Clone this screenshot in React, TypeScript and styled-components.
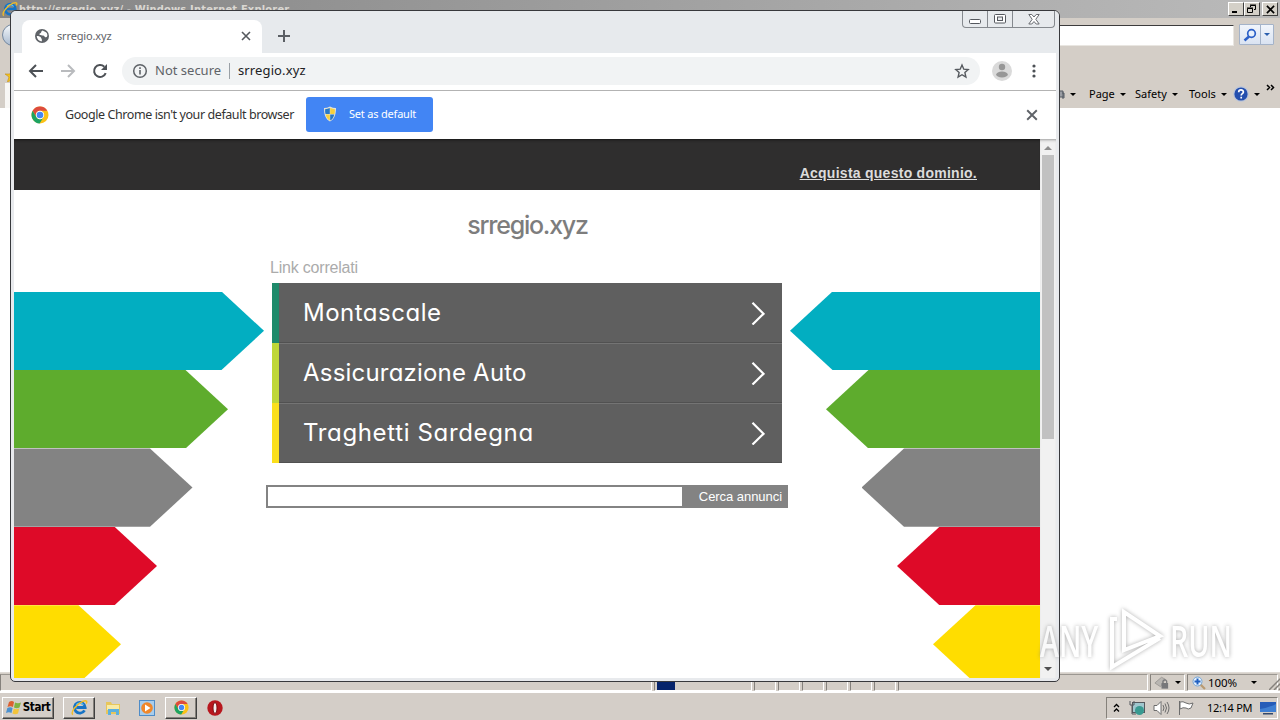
import { FC } from "react";
import styled, { createGlobalStyle } from "styled-components";

const ui = `"DejaVu Sans Condensed", "DejaVu Sans", sans-serif`;
const tahoma = `"Noto Sans", "Open Sans", sans-serif`;
const arial = `"Liberation Sans", Arial, sans-serif`;
const display = `Inter, Lato, sans-serif`;

const GlobalStyle = createGlobalStyle`
  * {
    box-sizing: border-box;
  }
  body {
    margin: 0;
    overflow: hidden;
    font-family: ${ui};
  }
  svg {
    display: block;
    flex: none;
  }
  button {
    font: inherit;
    padding: 0;
    margin: 0;
    border: 0;
  }
`;

const Desktop = styled("div")`
  position: relative;
  display: flex;
  flex-direction: column;
  width: 1280px;
  height: 720px;
  overflow: hidden;
  background: #d4cec7;
`;

const Text = styled("span")<{
  $size: number;
  $spacing?: number;
  $color?: string;
  $font?: string;
  $weight?: number;
}>`
  font-family: ${({ $font }) => $font || ui};
  font-size: ${({ $size }) => $size}px;
  font-weight: ${({ $weight }) => $weight || 400};
  letter-spacing: ${({ $spacing }) => $spacing || 0}px;
  color: ${({ $color }) => $color || "#000"};
  line-height: 1.2;
  white-space: nowrap;
`;

/* Internet Explorer, behind */

const Explorer = styled("div")`
  display: flex;
  flex-direction: column;
  height: 692px;
`;
const ExplorerTitle = styled("div")`
  display: flex;
  align-items: center;
  height: 18px;
  padding: 0 2px 0 2px;
  background: linear-gradient(90deg, #858585, #bababa);
`;
const ExplorerName = styled("div")`
  flex: 1;
  padding-left: 1px;
  color: #dad7d2;
  font-size: 11px;
  font-weight: bold;
  letter-spacing: 0.2px;
`;
const Bevel = styled("div")<{ $gap?: number }>`
  display: flex;
  align-items: center;
  justify-content: center;
  width: 16px;
  height: 14px;
  margin-left: ${({ $gap }) => $gap || 0}px;
  background: #d4d0c8;
  border: 1px solid;
  border-color: #fff #404040 #404040 #fff;
`;
const ExplorerAddress = styled("div")`
  display: flex;
  align-items: flex-start;
  height: 53px;
  padding: 6px 6px 0 0;
`;
const Globe = styled("div")`
  width: 22px;
  height: 22px;
  margin: 0 0 0 2px;
  border: 1px solid #7488a0;
  border-radius: 50%;
  background: linear-gradient(#f5f8fb, #aabbd0);
`;
const AddressField = styled("div")`
  flex: 1;
  height: 21px;
  margin: 1px 5px 0 4px;
  background: #fff;
  border: 1px solid;
  border-color: #3c3c3c #e9e6e1 #e9e6e1 #3c3c3c;
`;
const SearchSplit = styled("div")`
  display: flex;
  height: 21px;
  border: 1px solid #a4b3c9;
  border-radius: 1px;
  background: linear-gradient(#f1f5fb, #dae3f2);
`;
const SplitPart = styled("div")<{ $width: number }>`
  display: flex;
  align-items: center;
  justify-content: center;
  width: ${({ $width }) => $width}px;
  & + & {
    border-left: 1px solid #a4b3c9;
  }
`;
const CommandBar = styled("div")`
  display: flex;
  justify-content: space-between;
  height: 37px;
  padding: 0 3px 0 5px;
`;
const CommandStart = styled("div")`
  width: 12px;
  height: 37px;
  background: linear-gradient(#d4cec7 12px, #f8f7f5 12px);
`;
const Commands = styled("div")`
  display: flex;
  align-items: center;
  padding-top: 9px;
`;
const Command = styled("div")<{ $width: number }>`
  display: flex;
  align-items: center;
  gap: 5px;
  width: ${({ $width }) => $width}px;
`;
const More = styled("div")`
  width: 11px;
  height: 20px;
`;
const Caret = styled("i")<{ $color?: string }>`
  width: 0;
  height: 0;
  border: 3px solid transparent;
  border-top-color: ${({ $color }) => $color || "#000"};
  border-bottom: 0;
`;
const ExplorerPage = styled("div")`
  height: 564px;
  background: #fff;
`;
const ExplorerStatus = styled("div")`
  display: flex;
  height: 20px;
  border-top: 1px solid #dedad5;
  border-bottom: 1px solid #fff;
`;
const StatusCell = styled("div")<{ $width: number }>`
  display: flex;
  align-items: center;
  flex: none;
  width: ${({ $width }) => $width}px;
  height: 17px;
  margin-top: 1px;
  border: 1px solid;
  border-color: #9b9791 #fff #fff #85817c;
  margin-right: 2px;
`;
const StatusIcon = styled("div")<{ $left?: number; $right?: number }>`
  margin: 0 ${({ $right }) => $right || 0}px 0 ${({ $left }) => $left || 0}px;
`;
const Progress = styled("div")`
  width: 18px;
  height: 14px;
  margin-left: 2px;
  background: #06246b;
`;

/* Chrome window */

const ChromeWindow = styled("div")`
  position: absolute;
  left: 10px;
  top: 10px;
  width: 1050px;
  height: 672px;
  display: flex;
  flex-direction: column;
  padding: 0 3px 3px;
  background: #e8eaed;
  border: 1px solid #38393c;
  border-radius: 6px 6px 5px 5px;
  overflow: hidden;
`;
const TabStrip = styled("div")`
  display: flex;
  align-items: flex-end;
  height: 42px;
  background: #e7eaed;
  margin: 0 -3px;
  padding-left: 11px;
`;
const Tab = styled("div")`
  display: flex;
  align-items: center;
  width: 240px;
  height: 33px;
  padding: 0 11px 1px 12px;
  border-radius: 8px 8px 0 0;
  background: #fff;
`;
const TabName = styled("div")`
  flex: 1;
  padding-left: 7px;
  display: flex;
`;
const NewTab = styled("div")`
  align-self: flex-end;
  padding: 0 0 11px 16px;
  flex: 1;
`;
const WindowButtons = styled("div")`
  display: flex;
  align-self: flex-start;
  height: 17px;
  margin-right: 4px;
  border: 1px solid #85898e;
  border-top: 0;
  border-radius: 0 0 4px 4px;
`;
const WindowButton = styled("div")<{ $width: number }>`
  display: flex;
  align-items: center;
  justify-content: center;
  width: ${({ $width }) => $width}px;
  & + & {
    border-left: 1px solid #85898e;
  }
`;
const Toolbar = styled("div")`
  display: flex;
  align-items: center;
  height: 38px;
  padding: 0 20px 1px 14px;
  background: #fff;
  border-bottom: 1px solid #b3b3b3;
`;
const NavButtons = styled("div")`
  display: flex;
  gap: 16px;
`;
const Omnibox = styled("div")`
  display: flex;
  align-items: center;
  flex: 1;
  height: 28px;
  margin: 0 12px 0 14px;
  padding: 0 10px;
  border-radius: 14px;
  background: #f1f3f4;
`;
const Divider = styled("div")`
  width: 1px;
  height: 16px;
  margin: 0 8px 0 7px;
  background: #9aa0a6;
`;
const Url = styled("div")`
  flex: 1;
  display: flex;
`;
const NotSecure = styled("div")`
  display: flex;
  width: 67px;
  margin-left: 7px;
`;
const MenuDots = styled("div")`
  margin-left: 20px;
`;
const InfoBar = styled("div")`
  display: flex;
  align-items: center;
  height: 48px;
  padding: 0 18px 0 17px;
  background: #fff;
`;
const InfoText = styled("div")`
  display: flex;
  width: 229px;
  margin: 0 12px 1px 16px;
`;
const DefaultButton = styled("button")`
  display: flex;
  align-items: center;
  gap: 11px;
  width: 127px;
  height: 35px;
  padding: 0 0 1px 16px;
  margin: 0 auto 1px 0;
  border-radius: 3px;
  background: #4285f4;
`;

/* Parked page */

const Viewport = styled("div")`
  display: flex;
  flex: 1;
  min-height: 0;
`;
const Page = styled("div")`
  width: 1026px;
  height: 100%;
  overflow: hidden;
  background: #fff;
`;
const PageHeader = styled("div")`
  display: flex;
  justify-content: flex-end;
  height: 51px;
  padding: 26px 63px 0 0;
  background: #2f2e2e;
  box-shadow: inset 0 3px 3px -2px #171717;
`;
const BuyLink = styled("a")`
  font: bold 14px/17px ${arial};
  letter-spacing: 0.26px;
  color: #dcdcdc;
  text-decoration: underline;
  white-space: nowrap;
`;
const PageBody = styled("div")`
  display: flex;
  justify-content: space-between;
`;
const Ribbons = styled("div")<{ $right?: boolean }>`
  display: flex;
  flex-direction: column;
  align-items: ${({ $right }) => ($right ? "flex-end" : "flex-start")};
  width: 250px;
  padding-top: 101.6px;
`;
const Ribbon = styled("div")<{ $width: number; $color: string; $right?: boolean }>`
  width: ${({ $width }) => $width}px;
  height: 78.4px;
  background: ${({ $color }) => $color};
  clip-path: ${({ $right }) =>
    $right
      ? "polygon(42.5px 0, 100% 0, 100% 100%, 42.5px 100%, 0 50%)"
      : "polygon(0 0, calc(100% - 42.5px) 0, 100% 50%, calc(100% - 42.5px) 100%, 0 100%)"};
`;
const Main = styled("div")`
  display: flex;
  flex-direction: column;
  width: 522px;
`;
const DomainName = styled("div")`
  display: flex;
  justify-content: center;
  height: 68px;
  padding: 20px 0 0 1px;
`;
const Related = styled("div")`
  height: 25px;
  padding-left: 4px;
`;
const LinkList = styled("div")`
  display: flex;
  flex-direction: column;
  width: 510px;
  margin-left: 6px;
`;
const LinkRow = styled("a")<{ $accent: string }>`
  display: flex;
  align-items: center;
  justify-content: space-between;
  height: 60px;
  padding: 0 17px 0 24px;
  border-left: 7px solid ${({ $accent }) => $accent};
  background: #5f5f5f;
  box-shadow: inset 0 1px #747474, inset 0 -1px #515151;
  font-feature-settings: "cv11", "ss03";
  &:first-child {
    box-shadow: inset 0 -1px #515151;
  }
`;
const SearchForm = styled("div")`
  display: flex;
  height: 23px;
  margin-top: 22px;
  background: #838383;
`;
const SearchInput = styled("div")`
  width: 414px;
  margin: 2px 0 2px 2px;
  background: #fff;
`;
const SearchSubmit = styled("div")`
  flex: 1;
  display: flex;
  align-items: center;
  justify-content: flex-end;
  padding-right: 6px;
`;
const ScrollBar = styled("div")`
  display: flex;
  flex-direction: column;
  align-items: center;
  width: 16px;
  padding: 7px 0 7px;
  background: #f1f1f1;
  box-shadow: inset 0 3px 3px -2px #999;
`;
const Thumb = styled("div")`
  width: 12px;
  height: 284px;
  margin: 5px 0 auto;
  background: #c1c1c1;
`;

/* Taskbar */

const Taskbar = styled("div")`
  display: flex;
  align-items: center;
  height: 28px;
  padding: 2px 2px 0;
  border-top: 1px solid #fff;
  background: #d4cec8;
`;
const TaskItem = styled("div")<{ $width: number; $raised?: boolean; $margin?: number }>`
  display: flex;
  align-items: center;
  justify-content: center;
  width: ${({ $width }) => $width}px;
  height: 22px;
  margin-left: ${({ $margin }) => $margin || 0}px;
  border: 1px solid transparent;
  ${({ $raised }) =>
    $raised &&
    "border-color: #fff #404040 #404040 #fff; box-shadow: inset -1px -1px #85817b;"}
`;
const Tray = styled("div")`
  display: flex;
  align-items: center;
  width: 172px;
  height: 22px;
  margin-left: auto;
  padding-left: 6px;
  border: 1px solid;
  border-color: #85817b #fff #fff #85817b;
`;
const TrayIcons = styled("div")`
  display: flex;
  align-items: center;
  gap: 8px;
  width: 94px;
`;
const Clock = styled("div")`
  display: flex;
  width: 53px;
`;

/* Watermark over the desktop */

const Watermark = styled("div")`
  position: absolute;
  left: 1040px;
  top: 607px;
  display: flex;
  align-items: center;
  justify-content: space-between;
  width: 192px;
  opacity: 0.6;
  filter: drop-shadow(0 0 2px #777);
`;
const WatermarkWord = styled("span")`
  width: 62px;
  font: 600 44px/1.2 "Open Sans", sans-serif;
  color: #fff;
  transform: scaleX(0.65);
  transform-origin: left;
  white-space: nowrap;
`;

const ChromeLogo: FC<{ size: number }> = ({ size }) => (
  <svg width={size} height={size} viewBox="0 0 18 18">
    <circle cx="9" cy="9" r="8.5" fill="#fbc116" />
    <path d="M1.6 4.8A8.5 8.5 0 0 1 16.4 4.8H9a4.2 4.2 0 0 0-4 5.6z" fill="#dd4b3e" />
    <path d="M1.6 4.8A8.5 8.5 0 0 0 8.6 17.5l3.8-6A4.2 4.2 0 0 1 5 10.6z" fill="#1da362" />
    <circle cx="9" cy="9" r="4.2" fill="#fff" />
    <circle cx="9" cy="9" r="3.3" fill="#4587f3" />
  </svg>
);

const IeLogo: FC<{ size: number }> = ({ size }) => (
  <svg width={size} height={size} viewBox="0 0 18 18" fill="none">
    <path d="M14.3 12a5.7 5.7 0 1 1 .7-3H5.5" stroke="#1673c5" strokeWidth="3" />
    <path d="M13.2 6.2A5 5 0 0 0 5.5 6" stroke="#60c4f4" strokeWidth="1.2" />
    <path d="M2 16.5c-3-2.5 4-11.5 10.5-14C16.5 1 17.5 2.5 16 5" stroke="#f2bd27" strokeWidth="1.5" />
  </svg>
);

const Cross: FC<{ size: number; color: string; width: number }> = ({ size, color, width }) => (
  <svg width={size} height={size} viewBox="0 0 10 10">
    <path d="M1 1l8 8M9 1L1 9" stroke={color} strokeWidth={width} />
  </svg>
);

const Shield = () => (
  <svg width="16" height="16" viewBox="0 0 16 16">
    <path d="M8 .5c2 1 4 1.500 6 1.500C14 9 12.300 13.200 8 15.600 3.700 13.200 2 9 2 2 4 2 6 1.500 8 .5z" fill="#e3e3d6" />
    <path d="M7.800 2V8H3.500a17 17 0 0 1-.4-4.800C4.800 3.100 6.300 2.700 7.800 2z" fill="#2878c8" />
    <path d="M8.200 2V8h4.300a17 17 0 0 0 .4-4.800C11.200 3.100 9.700 2.700 8.200 2z" fill="#f8d03c" />
    <path d="M7.800 8.400v6.100C5.500 13.200 4.200 11 3.700 8.400z" fill="#f8d03c" />
    <path d="M8.200 8.400v6.100C10.500 13.200 11.800 11 12.300 8.400z" fill="#2878c8" />
  </svg>
);

const Magnifier: FC<{ plus?: boolean }> = ({ plus }) => (
  <svg width="14" height="14" viewBox="0 0 14 14" fill="none">
    {plus ? (
      <>
        <path d="M8.5 8.5l4.500 4.500" stroke="#b99a72" strokeWidth="2.2" />
        <circle cx="5.5" cy="5.5" r="4.5" fill="#e5f1fc" stroke="#74a4d6" />
        <path d="M5.5 2.5v6M2.500 5.500h6" stroke="#1f5fc0" strokeWidth="2" />
      </>
    ) : (
      <>
        <path d="M6 8.500L1.500 12.500" stroke="#2b5fc7" strokeWidth="2.4" />
        <circle cx="8.5" cy="5.500" r="3.8" fill="#e7f0fc" stroke="#2b5fc7" strokeWidth="1.7" />
      </>
    )}
  </svg>
);

const commands = [
  { name: "Page", width: 46 },
  { name: "Safety", width: 54 },
  { name: "Tools", width: 44 },
];

const ribbons = [
  { width: 250, color: "#02aec1" },
  { width: 214, color: "#5eac2d" },
  { width: 178.5, color: "#838383" },
  { width: 143, color: "#de0a28" },
  { width: 107, color: "#ffdd00" },
];

const links = [
  { name: "Montascale", accent: "#1f8a6b", spacing: 0.5 },
  { name: "Assicurazione Auto", accent: "#bfd738", spacing: 0.2 },
  { name: "Traghetti Sardegna", accent: "#fbdf1c", spacing: 0.65 },
];

const ExplorerWindow = () => (
  <Explorer>
    <ExplorerTitle>
      <IeLogo size={16} />
      <ExplorerName>http://srregio.xyz/ - Windows Internet Explorer</ExplorerName>
      <Bevel>
        <svg width="10" height="10">
          <path d="M1 8h5" stroke="#000" strokeWidth="2" />
        </svg>
      </Bevel>
      <Bevel>
        <svg width="10" height="10" fill="none" stroke="#000">
          <path d="M3.5 3V1.500h5v4H7M3 1h6M.5 4.500h5v4h-5zM0 4h6" />
        </svg>
      </Bevel>
      <Bevel $gap={2}>
        <Cross size={9} color="#000" width={1.8} />
      </Bevel>
    </ExplorerTitle>
    <ExplorerAddress>
      <Globe />
      <AddressField />
      <SearchSplit>
        <SplitPart $width={20}>
          <Magnifier />
        </SplitPart>
        <SplitPart $width={13}>
          <Caret $color="#2b5fae" />
        </SplitPart>
      </SearchSplit>
    </ExplorerAddress>
    <CommandBar>
      <CommandStart>
        <svg width="14" height="11" viewBox="0 2 14 11">
          <path d="M7 0l2 5h5l-4 3 2 6-5-4-5 4 2-6-4-3h5z" fill="#f2c31d" stroke="#c58f1c" strokeWidth=".6" />
        </svg>
      </CommandStart>
      <Commands>
        <Command $width={30}>
          <svg width="6" height="10">
            <path d="M0 2h4v6H0zM3 4h2v5H3" fill="#9a9da3" stroke="#555a63" />
          </svg>
          <Caret />
        </Command>
        {commands.map(({ name, width }) => (
          <Command key={name} $width={width}>
            <Text $size={11} $font={tahoma}>
              {name}
            </Text>
            <Caret />
          </Command>
        ))}
        <Command $width={33}>
          <svg width="16" height="16" viewBox="0 0 16 16">
            <circle cx="8" cy="8" r="7.8" fill="#b9c4da" />
            <circle cx="8" cy="8" r="6.6" fill="#244fae" />
            <path d="M5.700 6.200c0-3 4.700-2.900 4.700-.2 0 1.600-2.200 1.700-2.200 3.400M8.200 10.800v1.700" fill="none" stroke="#fff" strokeWidth="1.7" />
          </svg>
          <Caret />
        </Command>
        <More>
          <svg width="9" height="8" fill="none" stroke="#000" strokeWidth="1.500">
            <path d="M1 1l2.500 2.500L1 6M5 1l2.500 2.500L5 6" />
          </svg>
        </More>
      </Commands>
    </CommandBar>
    <ExplorerPage />
    <ExplorerStatus>
      <StatusCell $width={652} />
      <StatusCell $width={98}>
        <Progress />
      </StatusCell>
      {[0, 1, 2, 3, 4, 5].map((cell) => (
        <StatusCell key={cell} $width={22} />
      ))}
      <StatusCell $width={250} />
      <StatusCell $width={35}>
        <StatusIcon $left={2} $right={5}>
          <svg width="17" height="15" viewBox="0 0 18 15">
            <path d="M2 8l7-6 4 2-5 8z" fill="#b9b6b2" stroke="#9d9a96" />
            <path d="M9 8h7v6H9z" fill="#77777a" />
            <path d="M10.500 8V6q2-2.500 4 0v2" fill="none" stroke="#77777a" strokeWidth="1.300" />
          </svg>
        </StatusIcon>
        <Caret />
      </StatusCell>
      <StatusCell $width={91}>
        <StatusIcon $left={4} $right={2}>
          <Magnifier plus />
        </StatusIcon>
        <Text $size={11.5} $font={tahoma} $spacing={-0.1}>
          100%
        </Text>
        <StatusIcon $left={14} $right={12}>
          <Caret as="div" />
        </StatusIcon>
        <svg width="14" height="14" stroke="#85817c" strokeWidth="1.500">
          <path d="M0 14L13 1M5 14l8-8M10 14l4-4" />
        </svg>
      </StatusCell>
    </ExplorerStatus>
  </Explorer>
);

const ChromeTop = () => (
  <>
    <TabStrip>
      <Tab>
        <svg width="16" height="16" viewBox="0 0 16 16">
          <circle cx="8" cy="8" r="7" fill="#5f6368" />
          <path d="M8.500 2.500c-2 1-.5 2-2.500 3s1 2 3 2 1 2.500 3.500 1.500c1.500-.6 1-4-1-5zM2.700 8c2 0 4 .5 4.500 2s1.300 1.800.3 3.500C4.700 13 3 11 2.700 8z" fill="#fff" />
        </svg>
        <TabName>
          <Text $size={11} $font={tahoma} $color="#5f6368" $spacing={-0.15}>
            srregio.xyz
          </Text>
        </TabName>
        <Cross size={10} color="#55595e" width={1.6} />
      </Tab>
      <NewTab>
        <svg width="12" height="12">
          <path d="M6 0v12M0 6h12" stroke="#5b5f64" strokeWidth="2" />
        </svg>
      </NewTab>
      <WindowButtons>
        <WindowButton $width={24}>
          <svg width="12" height="11">
            <rect x=".5" y="5.500" width="11" height="4" rx="1" fill="#fff" stroke="#55585e" />
          </svg>
        </WindowButton>
        <WindowButton $width={25}>
          <svg width="12" height="10">
            <rect x=".5" y=".5" width="11" height="8.500" rx="1" fill="#fff" stroke="#55585e" />
            <rect x="3.500" y="3" width="5" height="3.500" fill="#e8eaed" stroke="#55585e" />
          </svg>
        </WindowButton>
        <WindowButton $width={42}>
          <svg width="12" height="11" viewBox="0 0 12 11">
            <path d="M.8.5h3L6 3 8.200.5h3L7.800 5.300l3.400 4.700h-3L6 7.500 3.800 10h-3l3.400-4.700z" fill="#fff" stroke="#686b70" />
          </svg>
        </WindowButton>
      </WindowButtons>
    </TabStrip>
    <Toolbar>
      <NavButtons>
        <svg width="16" height="16" fill="none" stroke="#4d5156" strokeWidth="2">
          <path d="M15 8H2.500M8 2L2 8l6 6" />
        </svg>
        <svg width="16" height="16" fill="none" stroke="#b9bbbe" strokeWidth="2">
          <path d="M1 8h12.500M8 2l6 6-6 6" />
        </svg>
        <svg width="16" height="16">
          <path d="M13.700 10.200A6 6 0 1 1 12.300 3.700" fill="none" stroke="#4d5156" strokeWidth="2" />
          <path d="M15 1v6H9z" fill="#4d5156" />
        </svg>
      </NavButtons>
      <Omnibox>
        <svg width="16" height="16" fill="none" stroke="#5f6368">
          <circle cx="8" cy="8" r="6.300" strokeWidth="1.500" />
          <path d="M8 7v4.500M8 4.300v1.700" strokeWidth="1.600" />
        </svg>
        <NotSecure>
          <Text $size={13} $font={tahoma} $color="#5f6368">
            Not secure
          </Text>
        </NotSecure>
        <Divider />
        <Url>
          <Text $size={13} $font={tahoma} $color="#202124" $spacing={0.12}>
            srregio.xyz
          </Text>
        </Url>
        <svg width="16" height="16" viewBox="0 0 16 16">
          <path d="M8 2l1.800 4.200 4.400.4-3.300 3 1 4.400L8 11.700 4.100 14l1-4.400-3.300-3 4.400-.4z" fill="none" stroke="#55595e" strokeWidth="1.400" />
        </svg>
      </Omnibox>
      <svg width="20" height="20" viewBox="0 0 20 20">
        <circle cx="10" cy="10" r="10" fill="#dadada" />
        <circle cx="10" cy="6" r="3.200" fill="#979797" />
        <ellipse cx="10" cy="13.500" rx="5.800" ry="3" fill="#979797" />
      </svg>
      <MenuDots>
        <svg width="4" height="16" fill="#4d5156">
          <circle cx="2" cy="3" r="1.600" />
          <circle cx="2" cy="8" r="1.600" />
          <circle cx="2" cy="13" r="1.600" />
        </svg>
      </MenuDots>
    </Toolbar>
    <InfoBar>
      <ChromeLogo size={18} />
      <InfoText>
        <Text $size={12.5} $font={tahoma} $color="#333" $spacing={-0.42}>
          Google Chrome isn't your default browser
        </Text>
      </InfoText>
      <DefaultButton>
        <Shield />
        <Text $size={11} $font={tahoma} $color="#fff" $spacing={-0.2}>
          Set as default
        </Text>
      </DefaultButton>
      <Cross size={12} color="#5f6368" width={1.6} />
    </InfoBar>
  </>
);

const ParkedPage = () => (
  <Page>
    <PageHeader>
      <BuyLink>Acquista questo dominio.</BuyLink>
    </PageHeader>
    <PageBody>
      <Ribbons>
        {ribbons.map(({ width, color }) => (
          <Ribbon key={color} $width={width} $color={color} />
        ))}
      </Ribbons>
      <Main>
        <DomainName>
          <Text $size={25} $font={display} $color="#7d7d7d" $weight={500} $spacing={-1.25}>
            srregio.xyz
          </Text>
        </DomainName>
        <Related>
          <Text $size={16} $font={arial} $color="#ababab" $spacing={-0.2}>
            Link correlati
          </Text>
        </Related>
        <LinkList>
          {links.map(({ name, accent, spacing }) => (
            <LinkRow key={name} $accent={accent}>
              <Text $size={24} $font={display} $color="#fff" $spacing={spacing}>
                {name}
              </Text>
              <svg width="14" height="24" fill="none" stroke="#fff" strokeWidth="2.2">
                <path d="M1.500 1.800L12.500 12.800 1.500 23.500" />
              </svg>
            </LinkRow>
          ))}
        </LinkList>
        <SearchForm>
          <SearchInput />
          <SearchSubmit>
            <Text $size={13} $font={arial} $color="#fff" $spacing={-0.05}>
              Cerca annunci
            </Text>
          </SearchSubmit>
        </SearchForm>
      </Main>
      <Ribbons $right>
        {ribbons.map(({ width, color }) => (
          <Ribbon key={color} $width={width} $color={color} $right />
        ))}
      </Ribbons>
    </PageBody>
  </Page>
);

const StartBar = () => (
  <Taskbar>
    <TaskItem $width={52} $raised>
      <svg width="17" height="16" viewBox="0 0 17 16">
        <path d="M3 2q3-2 5 0L7 7Q4.500 5.500 1.500 7z" fill="#dc6031" />
        <path d="M9 2.500q3 1.500 6 0L13.500 7.500q-3 1.500-5.500 0z" fill="#7fb342" />
        <path d="M1.300 8q3-1.500 5.300 0L5.500 13Q3 11.500 0 13z" fill="#4c91cf" />
        <path d="M7.800 8.500q2.500 1.500 5.400 0L12 13.500q-3 1.500-5.500 0z" fill="#f3c43b" />
      </svg>
      <Text $size={11.5} $weight={700} $spacing={-0.4}>
        Start
      </Text>
    </TaskItem>
    <TaskItem $width={32} $raised $margin={9}>
      <IeLogo size={17} />
    </TaskItem>
    <TaskItem $width={34} $margin={1}>
      <svg width="16" height="16" viewBox="0 0 16 16">
        <path d="M1 2h5l1 2h8v10H1z" fill="#e7c65b" />
        <path d="M2 5h12v5H2z" fill="#f8eaa5" />
        <path d="M3 9h11v6h-3v-3H6v3H3z" fill="#5cb0dd" />
      </svg>
    </TaskItem>
    <TaskItem $width={34}>
      <svg width="16" height="16" viewBox="0 0 16 16">
        <rect x=".5" y=".5" width="15" height="15" fill="#a8cdec" stroke="#4e8cc8" />
        <circle cx="8" cy="8" r="5.800" fill="#f0872a" />
        <path d="M6 4.500l5.500 3.500L6 11.500z" fill="#fff" />
      </svg>
    </TaskItem>
    <TaskItem $width={32} $raised $margin={1}>
      <ChromeLogo size={15} />
    </TaskItem>
    <TaskItem $width={34} $margin={1}>
      <svg width="16" height="16" viewBox="0 0 16 16">
        <circle cx="8" cy="8" r="7.700" fill="#b8171e" />
        <ellipse cx="8" cy="8" rx="2" ry="5.500" fill="#f4eeee" stroke="#7c0c10" />
      </svg>
    </TaskItem>
    <Tray>
      <TrayIcons>
        <svg width="8" height="10" fill="none" stroke="#000" strokeWidth="1.300">
          <path d="M1 4l2.500-2.500L6 4M1 8.500L3.500 6 6 8.500" />
        </svg>
        <svg width="16" height="16" viewBox="0 0 16 16">
          <rect x="3.500" y="2.500" width="12" height="10" fill="#9fc6cd" stroke="#55585e" />
          <path d="M1 1v4h4V1M3 5v9h4" fill="none" stroke="#55585e" />
          <circle cx="10.500" cy="10.500" r="4.500" fill="#399a91" />
        </svg>
        <svg width="17" height="16" fill="none" stroke="#6d6d6d">
          <path d="M1 5.500h3l4-4v13l-4-4H1z" fill="#fff" />
          <path d="M10 5q2 3 0 6M12 3.500q3 4.500 0 9M14 2q4 6 0 12" />
        </svg>
        <svg width="16" height="16" fill="#fff" stroke="#6d6d6d">
          <path d="M1.500 1v14M2 2q3-1 6 1 3 2 7 0l-2 5q-3 2-5 0-3-1-6 1z" />
        </svg>
      </TrayIcons>
      <Clock>
        <Text $size={11} $font={tahoma} $spacing={-0.3}>
          12:14 PM
        </Text>
      </Clock>
      <svg width="16" height="14" viewBox="0 0 16 14">
        <path d="M0 1h16v10H0z" fill="#255cb8" />
        <path d="M0 8q8-1 16-5v8H0z" fill="#3f7fd2" />
        <path d="M3 12h10v1.500H3z" fill="#33486b" />
      </svg>
    </Tray>
  </Taskbar>
);

const App = () => {
  return (
    <Desktop>
      <GlobalStyle />
      <ExplorerWindow />
      <StartBar />
      <ChromeWindow>
        <ChromeTop />
        <Viewport>
          <ParkedPage />
          <ScrollBar>
            <svg width="8" height="4">
              <path d="M0 4l4-4 4 4z" fill="#8d8d8d" />
            </svg>
            <Thumb />
            <svg width="8" height="4">
              <path d="M0 0h8L4 4z" fill="#505050" />
            </svg>
          </ScrollBar>
        </Viewport>
      </ChromeWindow>
      <Watermark>
        <WatermarkWord>ANY</WatermarkWord>
        <svg width="56" height="66" fill="none" stroke="#fff" strokeWidth="4">
          <path d="M16 5v38l36-14zM9 12H4v48l48-29" />
        </svg>
        <WatermarkWord>RUN</WatermarkWord>
      </Watermark>
    </Desktop>
  );
};

export default App;
